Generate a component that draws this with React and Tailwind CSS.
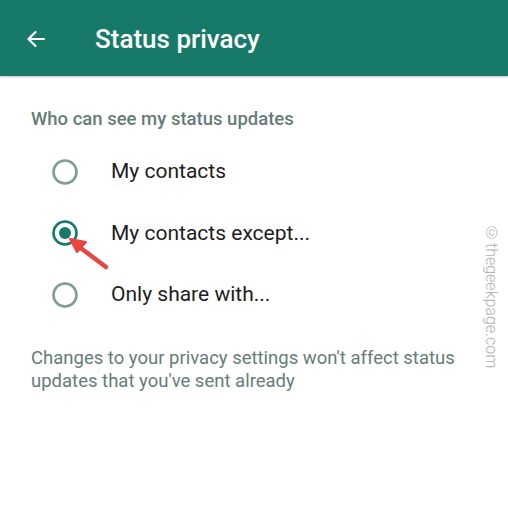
import React from 'react';

const Radio = ({ checked }) => (
  <svg width="30" height="30" viewBox="0 0 30 30" className="shrink-0">
    <circle cx="15" cy="15" r="11.5" fill="none" stroke={checked ? '#177a68' : '#7f9c97'} strokeWidth="2.6" />
    {checked && <circle cx="15" cy="15" r="6" fill="#177a68" />}
  </svg>
);

const App = () => {
  const options = [
    { label: 'My contacts', checked: false },
    { label: 'My contacts except...', checked: true },
    { label: 'Only share with...', checked: false },
  ];

  return (
    <div className="relative w-[508px] h-[524px] bg-white overflow-hidden" style={{ fontFamily: 'Roboto, "Noto Sans", sans-serif' }}>
      <header className="h-[76px] bg-[#177a68] flex items-center shadow-[0_1px_2px_rgba(0,0,0,0.25)]">
        <svg width="24" height="24" viewBox="0 0 24 24" className="ml-[24px] mt-[2px]">
          <path d="M20 12H5M11.5 5L4.5 12l7 7" fill="none" stroke="#fff" strokeWidth="2.2" strokeLinecap="round" strokeLinejoin="round" />
        </svg>
        <h1 className="ml-[47px] mt-[2px] text-white text-[26px] font-medium">Status privacy</h1>
      </header>

      <div className="pl-[31px] pt-[31px]">
        <p className="text-[18.5px] text-[#667c79] font-medium leading-[24px]">Who can see my status updates</p>
        <div className="mt-[10px] flex flex-col">
          {options.map((o, i) => (
            <div key={i} className="h-[61.5px] flex items-center">
              <div className="ml-[19px]"><Radio checked={o.checked} /></div>
              <span className="ml-[31px] text-[21px] text-[#1d1d1d]">{o.label}</span>
            </div>
          ))}
        </div>
        <p className="mt-[21px] pr-[30px] text-[18.5px] leading-[23px] text-[#667c79]">
          Changes to your privacy settings won't affect status updates that you've sent already
        </p>
      </div>

      <svg className="absolute left-[60px] top-[229px]" width="60" height="50" viewBox="0 0 60 50">
        <path d="M46 38L14 14" stroke="#e9463f" strokeWidth="4.5" strokeLinecap="round" />
        <path d="M10 10L26 13L17 23Z" fill="#e9463f" stroke="#e9463f" strokeWidth="2" strokeLinejoin="round" />
      </svg>

      <div className="absolute left-[479px] top-[224px] text-[16px] font-light text-[#aab4b4] [writing-mode:vertical-rl] whitespace-nowrap">
        ©thegeekpage.com
      </div>
    </div>
  );
};

export default App;
